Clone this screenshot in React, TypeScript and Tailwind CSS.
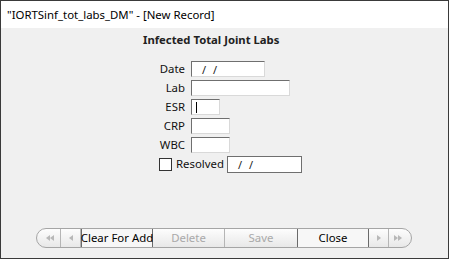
import React from "react";

const font = { fontFamily: '"Segoe UI", "Noto Sans", "Open Sans", sans-serif' };

function Field({ label, width, value, cursor }: { label: string; width: string; value?: string; cursor?: boolean }) {
  return (
    <div className="flex items-center h-[16px]">
      <div className="w-[46px] text-right pr-[1px] text-[11.4px] leading-[16px] text-[#111] whitespace-nowrap">{label}</div>
      <div
        className={`ml-[5px] h-[16px] ${width} bg-white border border-t-[#6f6f6f] border-l-[#6f6f6f] border-r-[#d9d9d9] border-b-[#d9d9d9] flex items-center text-[11px] text-[#222]`}
      >
        {value && <span className="pl-[10px] leading-none tracking-[2px]">{value}</span>}
        {cursor && <span className="ml-[4px] w-[1px] h-[11px] bg-black" />}
      </div>
    </div>
  );
}

function Tri({ dir, double }: { dir: "l" | "r"; double?: boolean }) {
  const one = dir === "l" ? "M5 0 L5 6 L1 3 Z" : "M1 0 L1 6 L5 3 Z";
  const two = dir === "l" ? "M9 0 L9 6 L5 3 Z" : "M5 0 L5 6 L9 3 Z";
  return (
    <svg width={double ? 10 : 6} height="6" viewBox={double ? "0 0 10 6" : "0 0 6 6"}>
      <path d={one} fill="#b8b8b8" />
      {double && <path d={two} fill="#b8b8b8" />}
    </svg>
  );
}

export default function App() {
  return (
    <div className="w-[449px] h-[259px] border border-[#3a3a3a] flex flex-col overflow-hidden" style={font}>
      {/* Title bar */}
      <div className="h-[27px] bg-white flex items-center pl-[6px] text-[11.4px] text-black whitespace-nowrap">
        "IORTSinf_tot_labs_DM" - [New Record]
      </div>

      <div className="flex-1 bg-[#f0f0f0] flex flex-col">
        <div className="ml-[142px] mt-[3px] text-[11.3px] font-bold leading-[18px] text-[#222] whitespace-nowrap">Infected Total Joint Labs</div>

        <div className="ml-[139px] mt-[12px] flex flex-col gap-[3px]">
          <Field label="Date" width="w-[74px]" value="/ /" />
          <Field label="Lab" width="w-[99px]" />
          <Field label="ESR" width="w-[29px]" cursor />
          <Field label="CRP" width="w-[39px]" />
          <Field label="WBC" width="w-[39px]" />
          <div className="flex items-center h-[16px]">
            <div className="ml-[19px] w-[13px] h-[13px] bg-white border border-[#333]" />
            <div className="ml-[4px] text-[11.4px] leading-[16px] text-[#111] whitespace-nowrap">Resolved</div>
            <div className="ml-[3px] w-[75px] h-[17px] bg-white border border-[#6f6f6f] flex items-center text-[11px] text-[#222]">
              <span className="pl-[10px] leading-none tracking-[2px]">/ /</span>
            </div>
          </div>
        </div>

        {/* Navigation bar */}
        <div className="mt-auto mb-[10px] ml-[35px] flex h-[20px] w-[376px] rounded-full border border-[#a5a5a5] bg-gradient-to-b from-[#fdfdfd] to-[#e8e8e8] text-[11.4px] whitespace-nowrap overflow-hidden">
          <div className="w-[24px] flex items-center justify-center border-r border-[#b5b5b5] pl-[3px]">
            <Tri dir="l" double />
          </div>
          <div className="w-[20px] flex items-center justify-center border-r border-[#b5b5b5]">
            <Tri dir="l" />
          </div>
          <div className="w-[72px] flex items-center justify-center border border-[#6a6a6a] -my-[1px] bg-[#f7f7f7] text-black">
            Clear For Add
          </div>
          <div className="w-[72px] flex items-center justify-center border-r border-[#b5b5b5] text-[#a9a9a9]">Delete</div>
          <div className="w-[72px] flex items-center justify-center text-[#a9a9a9]">Save</div>
          <div className="w-[72px] flex items-center justify-center border border-[#6a6a6a] -my-[1px] bg-[#f7f7f7] text-black">
            Close
          </div>
          <div className="w-[20px] flex items-center justify-center border-r border-[#b5b5b5]">
            <Tri dir="r" />
          </div>
          <div className="flex-1 flex items-center justify-center pr-[4px]">
            <Tri dir="r" double />
          </div>
        </div>
      </div>
    </div>
  );
}
